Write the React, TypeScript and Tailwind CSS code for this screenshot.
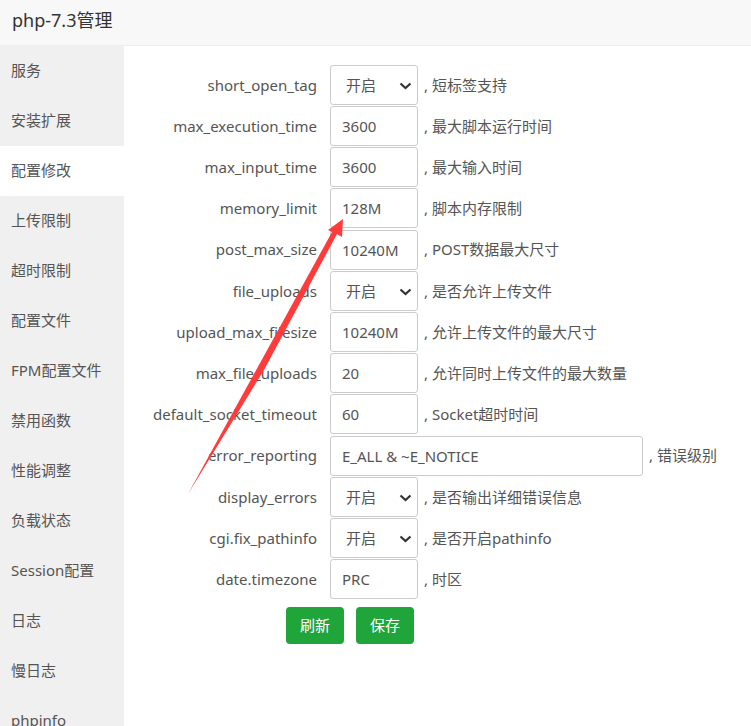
import React from "react";

const font = "font-['Noto_Sans','Noto_Sans_CJK_SC',sans-serif]";

const sidebar = ["服务", "安装扩展", "配置修改", "上传限制", "超时限制", "配置文件", "FPM配置文件", "禁用函数", "性能调整", "负载状态", "Session配置", "日志", "慢日志", "phpinfo"];

type Row = { label: string; value: string; note: string; select?: boolean; wide?: boolean };
const rows: Row[] = [
  { label: "short_open_tag", value: "开启", note: ", 短标签支持", select: true },
  { label: "max_execution_time", value: "3600", note: ", 最大脚本运行时间" },
  { label: "max_input_time", value: "3600", note: ", 最大输入时间" },
  { label: "memory_limit", value: "128M", note: ", 脚本内存限制" },
  { label: "post_max_size", value: "10240M", note: ", POST数据最大尺寸" },
  { label: "file_uploads", value: "开启", note: ", 是否允许上传文件", select: true },
  { label: "upload_max_filesize", value: "10240M", note: ", 允许上传文件的最大尺寸" },
  { label: "max_file_uploads", value: "20", note: ", 允许同时上传文件的最大数量" },
  { label: "default_socket_timeout", value: "60", note: ", Socket超时时间" },
  { label: "error_reporting", value: "E_ALL & ~E_NOTICE", note: ", 错误级别", wide: true },
  { label: "display_errors", value: "开启", note: ", 是否输出详细错误信息", select: true },
  { label: "cgi.fix_pathinfo", value: "开启", note: ", 是否开启pathinfo", select: true },
  { label: "date.timezone", value: "PRC", note: ", 时区" },
];

export default function App() {
  return (
    <div className={`relative h-[726px] w-[751px] overflow-hidden bg-white text-[#555] ${font}`}>
      <div className="flex h-[46px] items-center border-b border-[#eeeeee] bg-[#f8f8f8] pb-[5px] pl-[12px] text-[18px] text-[#333]">
        php-7.3管理
      </div>
      <div className="flex">
        <div className="h-[680px] w-[124px] shrink-0 overflow-hidden bg-[#f0f0f0]">
          {sidebar.map((s, i) => (
            <div
              key={s}
              className={`flex h-[50px] items-center pb-[1px] pl-[11px] text-[15px] ${i === 2 ? "bg-white" : ""}`}
            >
              {s}
            </div>
          ))}
        </div>
        <div className="flex-1 pt-[18.3px]">
          {rows.map((r) => (
            <div key={r.label} className="flex h-[41.2px] items-center text-[15px]">
              <div className="w-[193px] shrink-0 text-right">{r.label}</div>
              {r.select ? (
                <div className="relative ml-[13px] h-[40px] w-[88px]">
                  <select
                    defaultValue={r.value}
                    className={`h-full w-full appearance-none rounded-[3px] border border-[#cccccc] bg-white pl-[15px] text-[15px] text-[#555] ${font}`}
                  >
                    <option>开启</option>
                    <option>关闭</option>
                  </select>
                  <svg className="pointer-events-none absolute left-[69px] top-[17px]" width="13" height="8" viewBox="0 0 13 8" fill="none">
                    <path d="M1.5 1.5 L6.5 6 L11.5 1.5" stroke="#333" strokeWidth="2.2" />
                  </svg>
                </div>
              ) : (
                <input
                  readOnly
                  value={r.value}
                  className={`ml-[13px] h-[40px] rounded-[3px] border border-[#cccccc] bg-white pl-[11px] text-[15px] text-[#555] ${r.wide ? "w-[313px]" : "w-[88px]"}`}
                />
              )}
              <div className="ml-[6px] whitespace-nowrap">{r.note}</div>
            </div>
          ))}
          <div className="ml-[162px] mt-[7px] flex gap-[12px]">
            <button className="h-[37px] w-[58px] rounded-[4px] bg-[#20a53a] text-[15px] text-white">刷新</button>
            <button className="h-[37px] w-[58px] rounded-[4px] bg-[#20a53a] text-[15px] text-white">保存</button>
          </div>
        </div>
      </div>
      <svg className="absolute left-0 top-0" width="751" height="726" viewBox="0 0 751 726">
        <polygon points="188,494 332,232 328,230 343,219 342,237 337,234 264,370" fill="#ff3b3b" />
      </svg>
    </div>
  );
}
